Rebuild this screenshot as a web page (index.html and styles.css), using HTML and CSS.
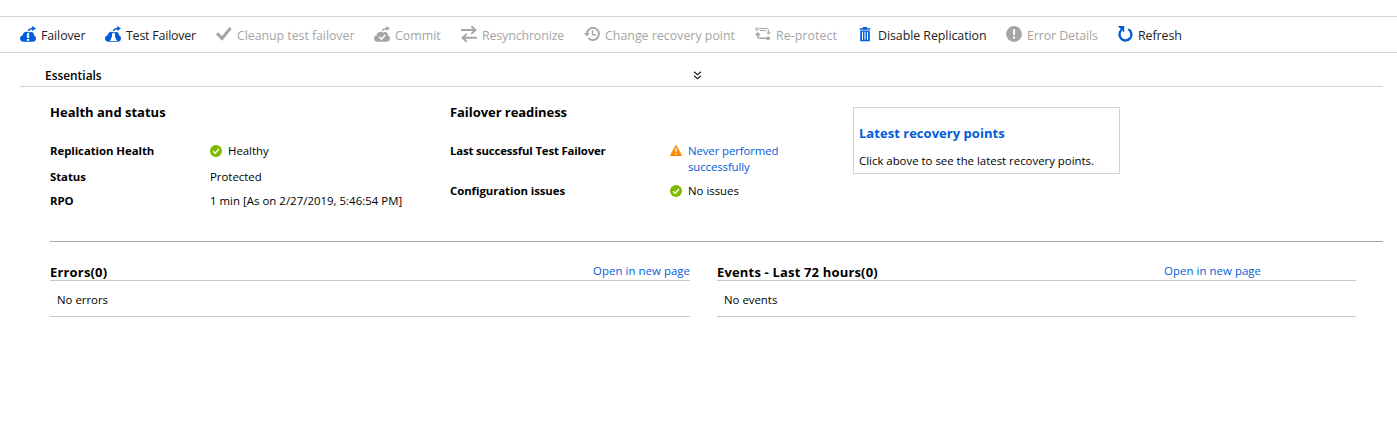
FILE: index.html
```html
<!DOCTYPE html>
<html lang="en">
<head>
<meta charset="utf-8">
<title>Replicated item</title>
<link rel="stylesheet" href="styles.css">
</head>
<body>
<nav class="toolbar">
  <a class="cmd cmd-failover"><svg class="icon" viewBox="0 0 16 16"><path fill="currentColor" d="M3.800 15.800C1.500 15.800 0 14.500 0 12.500c0-1.700 1-2.900 2.500-3.100C3 6.900 4.700 5.800 6.700 5.800c1 0 1.700.3 2.300.8.700-.5 1.500-.7 2.400-.6 1.700.2 2.700 1.600 2.800 3.500 1.200.6 1.800 1.700 1.800 3 0 2-1.400 3.300-3.400 3.300z"/><path fill="none" stroke="currentColor" stroke-width="1.400" d="M8.300 5C8.900 3.400 10.500 2.500 13 2.500"/><path fill="currentColor" d="M12.200 0 16 2.500 12.200 5z"/><path fill="#fff" d="M6.900 7.300h2.300v4.600H6.900zM6.900 13h2.300v1.800H6.900z"/></svg><span class="label">Failover</span></a>
  <a class="cmd cmd-test"><svg class="icon" viewBox="0 0 16 16"><path fill="currentColor" d="M3.800 15.800C1.500 15.800 0 14.500 0 12.500c0-1.700 1-2.900 2.500-3.100C3 6.900 4.700 5.800 6.700 5.800c1 0 1.700.3 2.300.8.700-.5 1.500-.7 2.400-.6 1.700.2 2.700 1.600 2.800 3.500 1.200.6 1.800 1.700 1.800 3 0 2-1.400 3.300-3.400 3.300z"/><path fill="none" stroke="currentColor" stroke-width="1.400" d="M8.300 5C8.900 3.400 10.500 2.500 13 2.500"/><path fill="currentColor" d="M12.200 0 16 2.500 12.200 5z"/><path fill="#fff" d="M7 7.300h3v3.100l2 4.500H5l2-4.500z"/></svg><span class="label">Test Failover</span></a>
  <a class="cmd cmd-cleanup off"><svg class="icon" viewBox="0 0 16 16"><path fill="none" stroke="currentColor" stroke-width="3" d="M1 7.300 6 12.400 14.600 2"/></svg><span class="label">Cleanup test failover</span></a>
  <a class="cmd cmd-commit off"><svg class="icon" viewBox="0 0 16 16"><path fill="currentColor" d="M3.800 15.800C1.500 15.800 0 14.500 0 12.500c0-1.700 1-2.900 2.500-3.100C3 6.900 4.700 5.800 6.700 5.800c1 0 1.700.3 2.300.8.700-.5 1.500-.7 2.400-.6 1.700.2 2.700 1.600 2.800 3.500 1.200.6 1.800 1.700 1.800 3 0 2-1.400 3.300-3.400 3.300z"/><path fill="none" stroke="currentColor" stroke-width="1.400" d="M8.300 5C8.900 3.400 10.500 2.500 13 2.500"/><path fill="currentColor" d="M12.200 0 16 2.500 12.200 5z"/><path fill="none" stroke="#fff" stroke-width="1.500" d="m5.300 10.800 2.300 2.400 3.600-4.300"/></svg><span class="label">Commit</span></a>
  <a class="cmd cmd-resync off"><svg class="icon" viewBox="0 0 16 16"><path fill="none" stroke="currentColor" stroke-width="1.900" d="M0 4h14.500M10.300.1 14.500 4l-4.200 3.900M16 11.800H1.500M5.700 7.900 1.500 11.800l4.200 3.900"/></svg><span class="label">Resynchronize</span></a>
  <a class="cmd cmd-change off"><svg class="icon" viewBox="0 0 16 16"><path fill="none" stroke="currentColor" stroke-width="1.900" d="M2.800 8A6.100 6.100 0 1 1 4.500 12.200"/><path fill="currentColor" d="M0 7h5.700L2.900 10.500z"/><path fill="none" stroke="currentColor" stroke-width="1.400" d="M8.500 4.300v4.400h3.400"/></svg><span class="label">Change recovery point</span></a>
  <a class="cmd cmd-reprotect off"><svg class="icon" viewBox="0 0 16 16"><g fill="none" stroke="currentColor"><circle cx="1.900" cy="3.200" r="1.300"/><path d="M4 2.500h7.200c1.500 0 2.300.7 2.300 2.300v2.700M11.300 6l2.200 2.200L15.700 6M5 4.500h5.500c.6 0 .9.300.9.900"/><path stroke-width="1.600" d="M12 12.300H5c-1.500 0-2.200-.7-2.200-2.200V8M.7 9.200l2.100-2.100 2.100 2.100"/></g><rect x="11.600" y="10.700" width="3.200" height="3.200" fill="currentColor"/></svg><span class="label">Re-protect</span></a>
  <a class="cmd cmd-disable"><svg class="icon" viewBox="0 0 16 16"><path fill="currentColor" d="M6 .9h4V2.300h3.300v1.500H2.700V2.300H6zM3.200 4.400h9.600v10.800H3.200z"/><path stroke="#fff" stroke-width="1.100" d="M5.500 5.800v7.900M8 5.800v7.900M10.500 5.800v7.900"/></svg><span class="label">Disable Replication</span></a>
  <a class="cmd cmd-error off"><svg class="icon" viewBox="0 0 16 16"><circle cx="8" cy="8" r="7.900" fill="currentColor"/><path fill="#fff" d="M6.900 3.300h2.300l-.3 6H7.200z"/><circle cx="8" cy="11.600" r="1.200" fill="#fff"/></svg><span class="label">Error Details</span></a>
  <a class="cmd cmd-refresh"><svg class="icon" viewBox="0 0 16 16"><path fill="none" stroke="currentColor" stroke-width="2.400" d="M11.400 3.200A6 6 0 1 1 4.500 3.900"/><path fill="currentColor" d="M.8.100h6.400v6.400z"/></svg><span class="label">Refresh</span></a>
</nav>
<main class="content">
  <header class="essentials">
    <span class="essentials-title">Essentials</span>
    <svg class="chevrons" viewBox="0 0 9 9"><path fill="none" stroke="#222" stroke-width="1.200" d="m1 .8 3.500 3L8 .8M1 4.800l3.500 3 3.500-3"/></svg>
  </header>
  <section class="summary">
    <div class="health">
      <h2 class="heading">Health and status</h2>
      <dl class="facts">
        <dt>Replication Health</dt>
        <dd class="with-icon"><svg class="mark" viewBox="0 0 12 12"><circle cx="6" cy="6" r="6" fill="#7fba00"/><path fill="none" stroke="#fff" stroke-width="1.400" d="m3 6.200 2.200 2.100L9 4"/></svg><span>Healthy</span></dd>
        <dt>Status</dt><dd>Protected</dd>
        <dt>RPO</dt><dd class="time">1 min [As on 2/27/2019, 5:46:54 PM]</dd>
      </dl>
    </div>
    <div class="readiness">
      <h2 class="heading heading-ready">Failover readiness</h2>
      <dl class="facts facts-ready">
        <dt class="last-test">Last successful Test Failover</dt>
        <dd class="with-icon"><svg class="mark" viewBox="0 0 12 12"><path fill="#ff8c00" stroke="#ff8c00" stroke-linejoin="round" d="m6 .5 5.500 10H.5z"/><path fill="#fff" d="M5.300 3.300h1.500l-.2 3.700h-1.100zM5.300 7.900h1.400v1.400H5.300z"/></svg><a class="link never">Never performed<br>successfully</a></dd>
        <dt>Configuration issues</dt>
        <dd class="with-icon"><svg class="mark" viewBox="0 0 12 12"><circle cx="6" cy="6" r="6" fill="#7fba00"/><path fill="none" stroke="#fff" stroke-width="1.400" d="m3 6.200 2.200 2.100L9 4"/></svg><span>No issues</span></dd>
      </dl>
    </div>
    <aside class="recovery">
      <a class="heading link">Latest recovery points</a>
      <p class="recovery-note">Click above to see the latest recovery points.</p>
    </aside>
  </section>
  <section class="lists">
    <article class="list">
      <header class="list-head"><h2 class="heading">Errors(0)</h2><a class="link open">Open in new page</a></header>
      <p class="empty">No errors</p>
    </article>
    <article class="list events">
      <header class="list-head"><h2 class="heading">Events - Last 72 hours(0)</h2><a class="link open">Open in new page</a></header>
      <p class="empty">No events</p>
    </article>
  </section>
</main>
</body>
</html>
```
FILE: styles.css
```css
* { box-sizing: border-box; }
body { margin: 0; padding-top: 16px; background: #fff; color: #000; font: 11.4px/16px "Open Sans", "Noto Sans", sans-serif; white-space: nowrap; }
h2, dl, dd, p { margin: 0; }
.toolbar { display: flex; height: 37px; padding-left: 20px; border-top: 1px solid #d3d3d3; border-bottom: 1px solid #d3d3d3; font-size: 12.4px; letter-spacing: -0.06px; }
.cmd { display: flex; align-items: center; gap: 5px; color: #015cda; flex: none; }
.icon { width: 16px; height: 16px; flex: none; margin-bottom: 1px; overflow: visible; }
.label { color: #222; padding-top: 2px; }
.off, .off .label { color: #a5a5a5; }
.cmd-failover { width: 85px; letter-spacing: -0.1px; }
.cmd-test { width: 111px; letter-spacing: -0.2px; }
.cmd-cleanup { width: 158px; }
.cmd-commit { width: 87px; letter-spacing: 0; }
.cmd-resync { width: 123px; letter-spacing: -0.13px; }
.cmd-change { width: 171px; letter-spacing: 0; }
.cmd-reprotect { width: 102px; letter-spacing: 0.05px; }
.cmd-disable { width: 149px; }
.cmd-error { width: 111px; letter-spacing: -0.1px; }
.content { padding: 0 14px 0 20px; }
.essentials { display: grid; grid-template-columns: 1fr 9px 1fr; align-items: center; height: 34px; padding: 12px 8px 0 0; border-bottom: 1px solid #d3d3d3; }
.essentials-title { padding: 0 0 2px 25px; font-size: 11.9px; font-weight: 600; }
.chevrons { width: 9px; height: 9px; }
.summary { display: flex; height: 155px; margin-left: 30px; padding-top: 16px; border-bottom: 1px solid #a5a5a5; }
.health { width: 400px; }
.readiness { width: 403px; }
.heading { font-size: 13px; line-height: 18px; font-weight: 700; }
.heading-ready { letter-spacing: -0.06px; }
.facts { display: grid; grid-template-columns: 160px 1fr; grid-template-rows: 26px 24px 24px; padding-top: 22px; }
.facts-ready { grid-template-columns: 220px 1fr; grid-template-rows: 40px 24px; }
dt { font-weight: 700; letter-spacing: -0.06px; }
.last-test { letter-spacing: -0.17px; }
.time { letter-spacing: 0.03px; }
.never { letter-spacing: -0.1px; }
.with-icon { display: flex; gap: 6px; }
.mark { width: 12px; height: 12px; margin-top: 2px; flex: none; }
.link { color: #015cda; }
.recovery { width: 267px; height: 67px; margin-top: 4px; padding: 16px 5px 0; border: 1px solid #d3d3d3; }
.recovery .heading { display: block; letter-spacing: 0.03px; }
.recovery-note { margin-top: 11px; }
.lists { display: flex; gap: 27px; margin-left: 30px; padding-top: 21px; }
.list { width: 640px; height: 54px; border-bottom: 1px solid #c8c8c8; }
.list .heading { letter-spacing: 0.17px; line-height: 19px; }
.list-head { display: flex; justify-content: space-between; height: 18px; border-bottom: 1px solid #c8c8c8; }
.list-head .open { line-height: 16px; letter-spacing: 0.06px; }
.events { width: 639px; }
.events .list-head { padding-right: 95px; }
.empty { padding: 11px 7px 0; }
```
